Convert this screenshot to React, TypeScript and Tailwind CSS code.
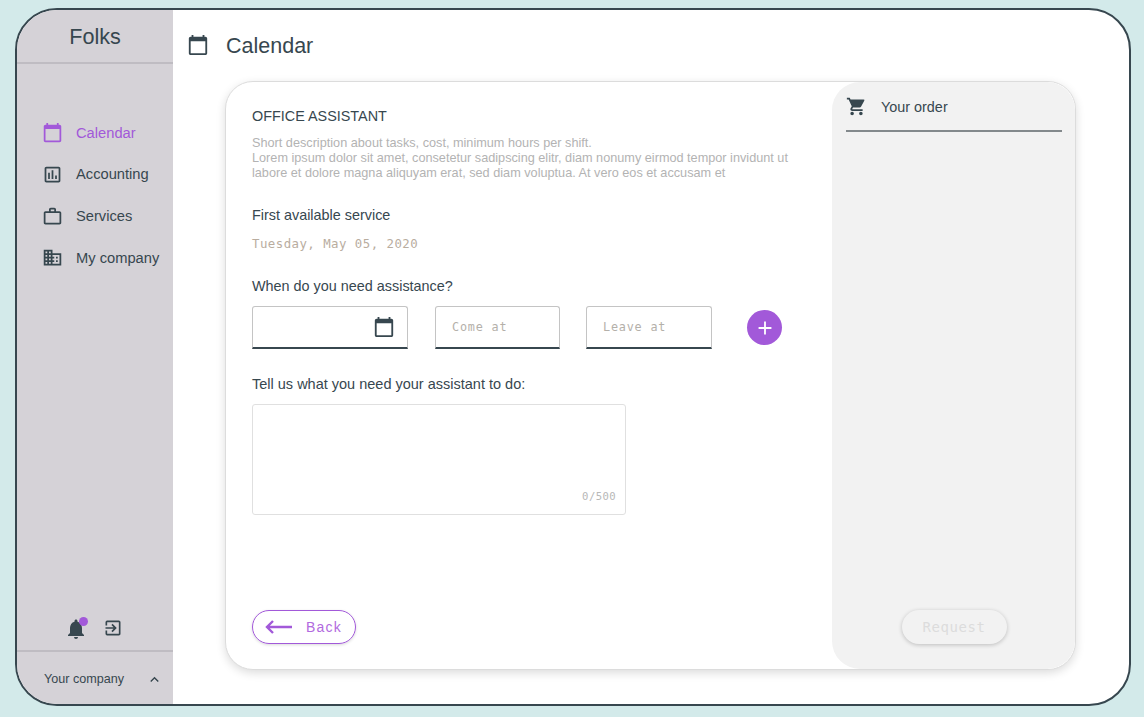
import React from "react";
import {
  MdCalendarToday,
  MdOutlineAssessment,
  MdWorkOutline,
  MdDomain,
  MdNotifications,
  MdExitToApp,
  MdShoppingCart,
  MdExpandLess,
  MdAdd,
} from "react-icons/md";

const sans = "font-['Liberation_Sans',Arial,sans-serif]";
const mono = "font-['DejaVu_Sans_Mono','Liberation_Mono',monospace]";

function NavItem({ icon, label, active }: { icon: React.ReactNode; label: string; active?: boolean }) {
  return (
    <div className={`flex h-[41.7px] items-center gap-[13px] pl-[25px] text-[14.7px] ${active ? "text-[#a259d9]" : "text-[#37474f]"}`}>
      <span className="flex w-[21px] justify-center text-[21px]">{icon}</span>
      <span>{label}</span>
    </div>
  );
}

function TimeField({ label, width }: { label: string; width: string }) {
  return (
    <div className={`flex h-[43px] items-center rounded-t-[3px] border border-b-2 border-[#c4c4c4] border-b-[#37474f] pl-[16px] pt-[2px] ${width}`}>
      <span className={`${mono} text-[11.8px] tracking-[0.8px] text-[#b4b0aa]`}>{label}</span>
    </div>
  );
}

export default function App() {
  return (
    <div className={`${sans} h-[717px] w-[1144px] overflow-hidden bg-[#d3eaea] pl-[15px] pt-[8px] text-[#37474f]`}>
      <div className="flex h-[698px] w-[1116px] overflow-hidden rounded-[42px] border-2 border-[#37474f] bg-white">
        <aside className="flex w-[156px] shrink-0 flex-col bg-[#d5d2d7]">
          <div className="flex h-[54px] items-start justify-center border-b-2 border-[#bfbcc2] pt-[13px] text-[21.6px] leading-[28px]">
            <span>Folks</span>
          </div>
          <nav className="mt-[47.8px] flex flex-col">
            <NavItem active icon={<MdCalendarToday />} label="Calendar" />
            <NavItem icon={<MdOutlineAssessment />} label="Accounting" />
            <NavItem icon={<MdWorkOutline />} label="Services" />
            <NavItem icon={<MdDomain />} label="My company" />
          </nav>
          <div className="mt-auto flex h-[46px] items-start gap-[15px] pl-[47px] pt-[13px]">
            <span className="relative text-[24px] leading-none">
              <MdNotifications />
              <span className="absolute right-0 top-0 h-[9px] w-[9px] rounded-full bg-[#a259d9]" />
            </span>
            <span className="pt-[1px] text-[20px] leading-none">
              <MdExitToApp />
            </span>
          </div>
          <div className="flex h-[54px] items-center justify-between border-t-2 border-[#bfbcc2] pl-[27px] pr-[10px] pt-[2px] text-[12.6px]">
            <span>Your company</span>
            <MdExpandLess className="text-[17px]" />
          </div>
        </aside>

        <main className="flex min-w-0 flex-1 flex-col">
          <header className="flex h-[71px] items-center gap-[17px] pl-[14px]">
            <MdCalendarToday className="-mt-[1px] text-[22px]" />
            <h1 className="pt-[1px] text-[21.5px] font-normal">Calendar</h1>
          </header>
          <section className="ml-[52px] flex h-[589px] w-[851px] overflow-hidden rounded-[28px] border border-[#dcdcdc] bg-white shadow-[0_3px_10px_rgba(0,0,0,0.14)]">
            <div className="flex w-[606px] shrink-0 flex-col pl-[26px] pt-[25px]">
              <h2 className="text-[14.4px] font-normal leading-[18px]">OFFICE ASSISTANT</h2>
              <p className="mt-[11px] w-[560px] text-[12.7px] leading-[15px] text-[#b3b3b3]">
                Short description about tasks, cost, minimum hours per shift.
                <br />
                Lorem ipsum dolor sit amet, consetetur sadipscing elitr, diam nonumy eirmod tempor invidunt ut
                <br />
                labore et dolore magna aliquyam erat, sed diam voluptua. At vero eos et accusam et
              </p>
              <h3 className="mt-[25px] text-[14.4px] font-normal leading-[18px]">First available service</h3>
              <div className={`${mono} mt-[11px] text-[12.4px] tracking-[0.45px] leading-[18px] text-[#b9ad9f]`}>Tuesday, May 05, 2020</div>
              <h3 className="mt-[24px] text-[14.4px] font-normal leading-[18px]">When do you need assistance?</h3>
              <div className="mt-[11px] flex items-center">
                <div className="flex h-[43px] w-[156px] items-center justify-end rounded-t-[3px] border border-b-2 border-[#c4c4c4] border-b-[#37474f] pr-[12px]">
                  <MdCalendarToday className="text-[22px]" />
                </div>
                <div className="ml-[27px]"><TimeField label="Come at" width="w-[125px]" /></div>
                <div className="ml-[26px]"><TimeField label="Leave at" width="w-[126px]" /></div>
                <button className="ml-[35px] flex h-[35px] w-[35px] items-center justify-center rounded-full bg-[#a259d9] text-[22px] text-white">
                  <MdAdd />
                </button>
              </div>
              <h3 className="mt-[26px] text-[14.5px] font-normal leading-[18px]">Tell us what you need your assistant to do:</h3>
              <div className="mt-[11px] flex h-[111px] w-[374px] items-end justify-end rounded-[3px] border border-[#e0e0e0] pb-[11px] pr-[9px]">
                <span className={`${mono} text-[10.6px] tracking-[0.4px] leading-[14px] text-[#b8b8b8]`}>0/500</span>
              </div>
              <button className="mt-[95px] flex h-[34px] w-[104px] items-center rounded-full border border-[#a259d9] pl-[12px] shadow-[0_1px_3px_rgba(0,0,0,0.15)]">
                <svg width="27" height="14" viewBox="0 0 27 14" fill="none" stroke="#a259d9" strokeWidth="2.4">
                  <path d="M27 7H2M8 1L2 7l6 6" />
                </svg>
                <span className="ml-[14px] text-[14px] tracking-[1.2px] text-[#b26ae0]">Back</span>
              </button>
            </div>
            <aside className="flex flex-1 flex-col rounded-[28px] bg-[#f2f2f2] pl-[14px] pr-[13px]">
              <div className="flex h-[50px] items-center gap-[14px] border-b-2 border-[#83898c] text-[14.4px]">
                <MdShoppingCart className="text-[21px]" />
                <span className="pt-[3px]">Your order</span>
              </div>
              <button className={`${mono} mx-auto mb-[25px] mt-auto h-[34px] w-[105px] rounded-full bg-[#f2f2f2] pt-[1px] text-[14px] tracking-[0.6px] text-[#dcdcdc] shadow-[0_1px_4px_rgba(0,0,0,0.22)]`}>
                Request
              </button>
            </aside>
          </section>
        </main>
      </div>
    </div>
  );
}
